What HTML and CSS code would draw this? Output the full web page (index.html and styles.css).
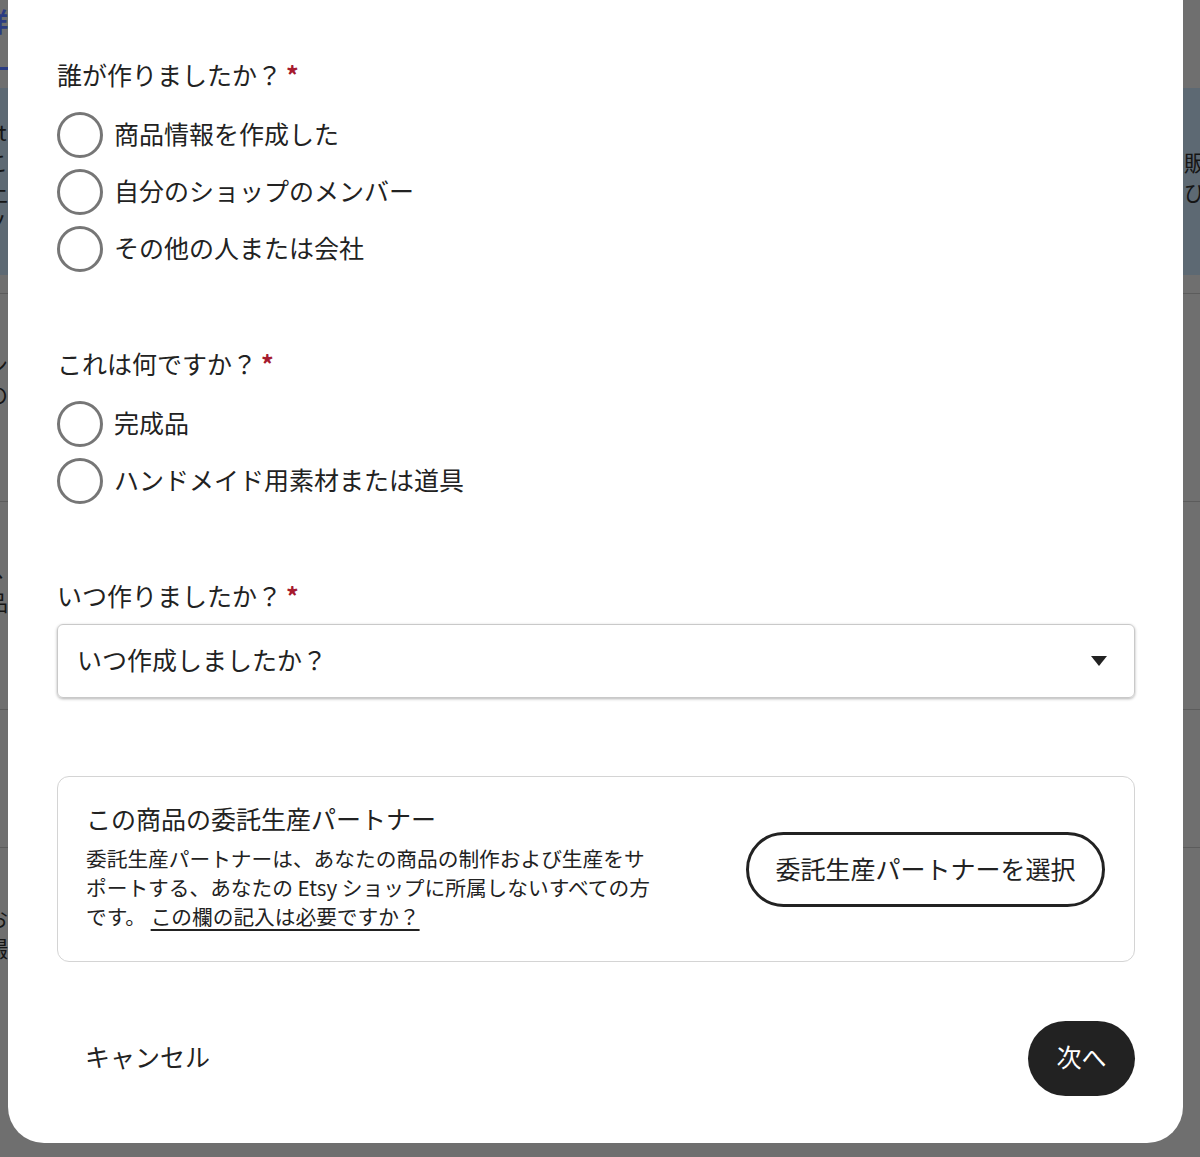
FILE: index.html
```html
<!DOCTYPE html>
<html lang="ja">
<head>
    <meta charset="UTF-8">
    <meta name="viewport" content="width=device-width, initial-scale=1.0">
    <title>商品の詳細 | Etsy</title>
    <link rel="stylesheet" href="styles.css">
</head>
<body>
    <div class="page">
        <div class="page-tabs"><span class="tab-active">詳</span></div>
        <div class="page-notice">
            <div class="notice-line"><span class="frag-left">Et</span><span class="frag-right"></span></div>
            <div class="notice-line"><span class="frag-left">こ</span><span class="frag-right">販売</span></div>
            <div class="notice-line"><span class="frag-left">上</span><span class="frag-right">びに</span></div>
            <div class="notice-line"><span class="frag-left">ノ</span><span class="frag-right"></span></div>
        </div>
        <div class="page-section">
            <div class="page-row"><span class="frag-left">ン</span></div>
            <div class="page-row"><span class="frag-left">の</span></div>
        </div>
        <div class="page-section">
            <div class="page-row"><span class="frag-left">ヽ</span></div>
            <div class="page-row"><span class="frag-left">品</span></div>
        </div>
        <div class="page-section tall"></div>
        <div class="page-section">
            <div class="page-row"><span class="frag-left">お</span></div>
            <div class="page-row"><span class="frag-left">撮</span></div>
        </div>
    </div>

    <div class="modal">
        <div class="field">
            <p class="field-label">誰が作りましたか？<span class="req">*</span></p>
            <div class="radios">
                <label class="radio"><input type="radio" name="who"><span>商品情報を作成した</span></label>
                <label class="radio"><input type="radio" name="who"><span>自分のショップのメンバー</span></label>
                <label class="radio"><input type="radio" name="who"><span>その他の人または会社</span></label>
            </div>
        </div>

        <div class="field">
            <p class="field-label">これは何ですか？<span class="req">*</span></p>
            <div class="radios">
                <label class="radio"><input type="radio" name="what"><span>完成品</span></label>
                <label class="radio"><input type="radio" name="what"><span>ハンドメイド用素材または道具</span></label>
            </div>
        </div>

        <div class="field field-select">
            <p class="field-label">いつ作りましたか？<span class="req">*</span></p>
            <div class="select-box">
                <span class="select-value">いつ作成しましたか？</span>
                <svg class="select-arrow" width="16" height="10" viewBox="0 0 16 10"><path d="M0 0h16L8 10z" fill="#222"/></svg>
            </div>
        </div>

        <div class="partner-card">
            <div class="partner-text">
                <h3>この商品の委託生産パートナー</h3>
                <p>委託生産パートナーは、あなたの商品の制作および生産をサポートする、あなたの Etsy ショップに所属しないすべての方です。 <a href="#">この欄の記入は必要ですか？</a></p>
            </div>
            <button class="btn-outline">委託生産パートナーを選択</button>
        </div>

        <div class="modal-footer">
            <button class="btn-cancel">キャンセル</button>
            <button class="btn-next">次へ</button>
        </div>
    </div>
</body>
</html>
```

FILE: styles.css
```css
* {
    box-sizing: border-box;
}
body {
    margin: 0;
    height: 1157px;
    overflow: hidden;
    background-color: #6f6f6f;
    font-family: "Noto Sans CJK JP", "Noto Sans", sans-serif;
    color: #222;
}

/* page behind the overlay */
.page {
    width: 1200px;
    color: #151515;
    font-size: 22px;
    white-space: nowrap;
}
.page-tabs {
    height: 70px;
    padding-top: 6px;
}
.tab-active {
    display: block;
    width: 36px;
    margin-left: -28px;
    height: 64px;
    text-align: right;
    color: #2a3b82;
    font-weight: bold;
    font-size: 26px;
    line-height: 30px;
    border-bottom: 3px solid #2a3b82;
}
.page-notice {
    margin-top: 18px;
    height: 187px;
    padding-top: 28px;
    background-color: #5d6973;
}
.notice-line {
    display: flex;
    justify-content: space-between;
    height: 30px;
    line-height: 30px;
}
.frag-left {
    margin-left: -14px;
}
.frag-right {
    margin-right: -24px;
    width: 40px;
    overflow: hidden;
}
.page-section {
    border-top: 1px solid #5c5c5c;
    margin-top: 18px;
    padding-top: 54px;
    height: 190px;
}
.page-section.tall {
    height: 120px;
}
.page-row {
    height: 30px;
    line-height: 30px;
}

/* modal */
.modal {
    position: absolute;
    left: 8px;
    top: 0;
    width: 1175px;
    padding: 56px 48px 47px 49px;
    background-color: #fff;
    border-radius: 0 0 36px 36px;
}
.field {
    margin-bottom: 73px;
}
.field-label {
    margin: 0 0 20px;
    font-size: 25px;
    line-height: 36px;
    color: #222;
}
.req {
    margin-left: 4px;
    color: #a61a2e;
    font-weight: bold;
}
.radios {
    display: flex;
    flex-direction: column;
    gap: 11px;
}
.radio {
    display: flex;
    align-items: center;
    gap: 11px;
    height: 46px;
    font-size: 25px;
    color: #222;
}
.radio span {
    margin-bottom: 4px;
}
.radio input {
    appearance: none;
    margin: 0;
    width: 46px;
    height: 46px;
    border: 3px solid #767676;
    border-radius: 50%;
    background: #fff;
}
.field-select {
    margin-bottom: 78px;
}
.field-select .field-label {
    margin-bottom: 11px;
}
.select-box {
    display: flex;
    align-items: center;
    justify-content: space-between;
    height: 74px;
    padding: 0 27px 0 19px;
    border: 1px solid #c9c9c9;
    border-radius: 6px;
    box-shadow: 0 1px 3px rgba(0, 0, 0, 0.3);
    font-size: 25px;
    color: #222;
}
.select-value {
    margin-bottom: 4px;
}
.partner-card {
    display: flex;
    align-items: center;
    justify-content: space-between;
    padding: 24px 29px 30px 28px;
    border: 1px solid #d4d4d4;
    border-radius: 12px;
}
.partner-text {
    flex: 0 0 577px;
}
.partner-text h3 {
    margin: 0 0 8px;
    font-size: 25px;
    line-height: 35px;
    font-weight: normal;
}
.partner-text p {
    margin: 0;
    font-size: 20.7px;
    line-height: 29px;
}
.partner-text a {
    color: #222;
    text-decoration: underline;
    text-underline-offset: 4px;
}
.btn-outline {
    width: 359px;
    height: 75px;
    margin-top: 6px;
    padding: 0 0 3px;
    background: #fff;
    border: 3px solid #222;
    border-radius: 999px;
    font-family: inherit;
    font-size: 25px;
    color: #222;
}
.modal-footer {
    display: flex;
    justify-content: space-between;
    align-items: center;
    margin-top: 59px;
}
.btn-cancel {
    padding: 0 28px 5px;
    height: 75px;
    background: none;
    border: none;
    font-family: inherit;
    font-size: 25px;
    color: #222;
}
.btn-next {
    width: 107px;
    height: 75px;
    padding: 0 0 5px;
    background-color: #222;
    color: #fff;
    border: none;
    border-radius: 999px;
    font-family: inherit;
    font-size: 25px;
}
```
